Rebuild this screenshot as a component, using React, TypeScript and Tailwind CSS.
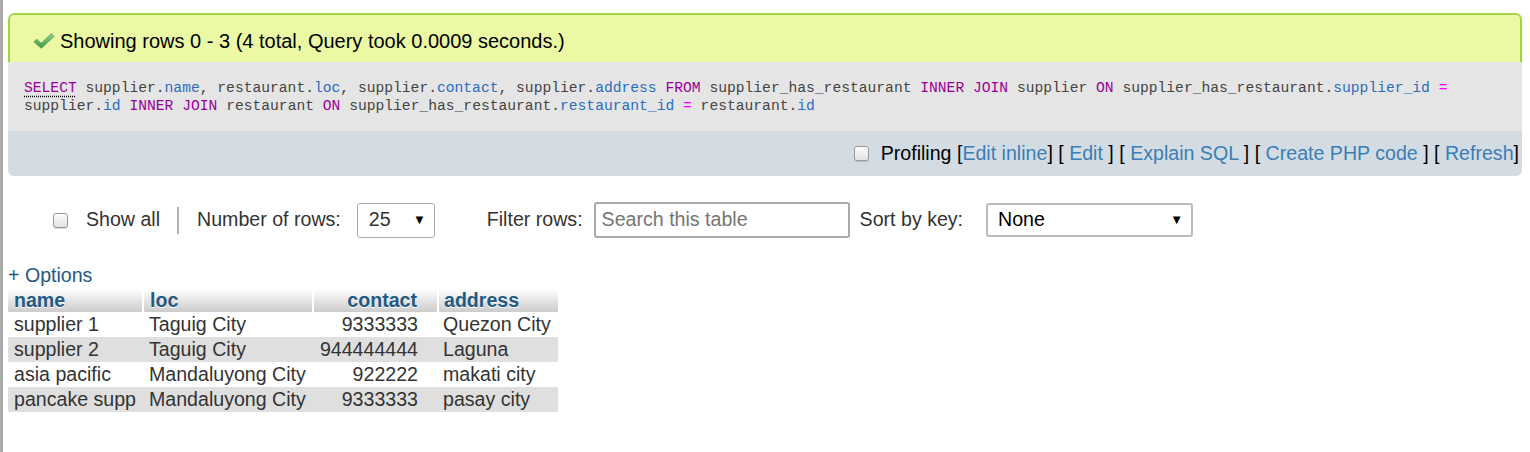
import React from 'react'

const rows = [
  { name: 'supplier 1', loc: 'Taguig City', contact: '9333333', address: 'Quezon City' },
  { name: 'supplier 2', loc: 'Taguig City', contact: '944444444', address: 'Laguna' },
  { name: 'asia pacific', loc: 'Mandaluyong City', contact: '922222', address: 'makati city' },
  { name: 'pancake supp', loc: 'Mandaluyong City', contact: '9333333', address: 'pasay city' },
]

const CheckIcon = () => (
  <svg width="22" height="20" viewBox="0 0 24 20" className="shrink-0">
    <defs>
      <linearGradient id="chk" x1="0" y1="0" x2="0" y2="1">
        <stop offset="0" stopColor="#8fd18f" />
        <stop offset="1" stopColor="#3d9a3d" />
      </linearGradient>
    </defs>
    <path d="M1 11 L4 8 L9 12.5 L20 2 L23 5 L9 18 Z" fill="url(#chk)" stroke="#4a9a4a" strokeWidth="0.8" strokeLinejoin="round" />
  </svg>
)

const Kw = ({ children }: { children: React.ReactNode }) => <span className="text-[#990099]">{children}</span>
const Id = ({ children }: { children: React.ReactNode }) => <span className="text-[#2a6cc0]">{children}</span>
const Op = ({ children }: { children: React.ReactNode }) => <span className="text-[#ff00ff]">{children}</span>

const Checkbox = () => (
  <span className="inline-block w-[15px] h-[15px] rounded-[3px] border border-[#9a9a9a] bg-gradient-to-b from-[#fdfdfd] to-[#e2e2e2] shadow-[0_1px_1px_rgba(0,0,0,0.15)]" />
)

const Link = ({ children }: { children: React.ReactNode }) => <span className="text-[#3c7db5]">{children}</span>

export default function App() {
  return (
    <div className="flex w-[1530px] h-[452px] bg-white text-[#333] font-['Liberation_Sans',Arial,sans-serif] text-[19.6px] overflow-hidden">
      <div className="w-[3px] h-full bg-[#ababab] shrink-0" />
      <div className="flex-1 pl-[5px] pr-[8px] pt-[13px]">
        {/* result panel */}
        <div className="rounded-[6px] overflow-hidden">
          <div className="h-[49px] flex items-center gap-[5px] pl-[23px] pt-[5px] bg-[#ebf8a4] border-2 border-b-0 border-[#a2d246] rounded-t-[6px] text-black text-[20px]">
            <CheckIcon />
            <span>Showing rows 0 - 3 (4 total, Query took 0.0009 seconds.)</span>
          </div>
          <div className="bg-[#e5e5e5] pt-[17px] pb-[16px] pl-[16px] pr-[8px] font-['Liberation_Mono',monospace] text-[14.65px] leading-[18px] text-[#444] whitespace-pre">
            <div>
              <span className="text-[#990099] underline decoration-dotted decoration-black underline-offset-[4px]">SELECT</span> supplier.<Id>name</Id>, restaurant.<Id>loc</Id>, supplier.<Id>contact</Id>, supplier.<Id>address</Id> <Kw>FROM</Kw> supplier_has_restaurant <Kw>INNER</Kw> <Kw>JOIN</Kw> supplier <Kw>ON</Kw> supplier_has_restaurant.<Id>supplier_id</Id> <Op>=</Op>
            </div>
            <div>
              supplier.<Id>id</Id> <Kw>INNER</Kw> <Kw>JOIN</Kw> restaurant <Kw>ON</Kw> supplier_has_restaurant.<Id>restaurant_id</Id> <Op>=</Op> restaurant.<Id>id</Id>
            </div>
          </div>
          <div className="h-[45px] bg-[#d3dce3] flex items-center justify-end pr-[3px] text-black">
            <Checkbox />
            <span className="ml-[12px] whitespace-pre">
              Profiling [<Link>Edit inline</Link>] [ <Link>Edit</Link> ] [ <Link>Explain SQL</Link> ] [ <Link>Create PHP code</Link> ] [ <Link>Refresh</Link>]
            </span>
          </div>
        </div>

        {/* navigation toolbar */}
        <div className="mt-[25px] h-[38px] flex items-center text-[#333]">
          <div className="ml-[45px] flex"><Checkbox /></div>
          <span className="ml-[18px]">Show all</span>
          <span className="ml-[17px] w-[2px] h-[27px] bg-[#b0b0b0]" />
          <span className="ml-[18px]">Number of rows:</span>
          <div className="ml-[16px] w-[78px] h-[35px] border border-[#aaa] rounded-[3px] flex items-center justify-between pl-[11px] pr-[8px] bg-white">
            <span>25</span>
            <span className="text-[13px] text-black">▼</span>
          </div>
          <span className="ml-[52px]">Filter rows:</span>
          <div className="ml-[11px] w-[256px] h-[36px] border-2 border-[#aaa] rounded-[3px] flex items-center pl-[6px] text-[#757575]">
            Search this table
          </div>
          <span className="ml-[10px]">Sort by key:</span>
          <div className="ml-[23px] w-[207px] h-[34px] border-2 border-[#bbb] rounded-[3px] flex items-center justify-between pl-[10px] pr-[8px]">
            <span className="text-black">None</span>
            <span className="text-[13px] text-black">▼</span>
          </div>
        </div>

        <div className="mt-[26px] text-[#235a81] leading-[20px]">+ Options</div>

        <table className="mt-[4px] border-collapse leading-[25px]">
          <thead>
            <tr className="bg-gradient-to-b from-white to-[#cccccc] text-[#235a81] font-bold h-[23px] leading-[23px]">
              <th className="w-[135px] text-left pl-[6px] border-r-2 border-white [text-shadow:0_1px_0_#fff]">name</th>
              <th className="w-[170px] text-left pl-[6px] border-r-2 border-white [text-shadow:0_1px_0_#fff]">loc</th>
              <th className="w-[125px] text-right pr-[20px] border-r-2 border-white [text-shadow:0_1px_0_#fff]">contact</th>
              <th className="w-[120px] text-left pl-[5px] [text-shadow:0_1px_0_#fff]">address</th>
            </tr>
          </thead>
          <tbody>
            {rows.map((r, i) => (
              <tr key={i} className={i % 2 === 1 ? 'bg-[#dfdfdf]' : 'bg-white'}>
                <td className="pl-[6px] whitespace-nowrap">{r.name}</td>
                <td className="pl-[6px] whitespace-nowrap">{r.loc}</td>
                <td className="pr-[20px] text-right whitespace-nowrap">{r.contact}</td>
                <td className="pl-[5px] whitespace-nowrap">{r.address}</td>
              </tr>
            ))}
          </tbody>
        </table>
      </div>
    </div>
  )
}
